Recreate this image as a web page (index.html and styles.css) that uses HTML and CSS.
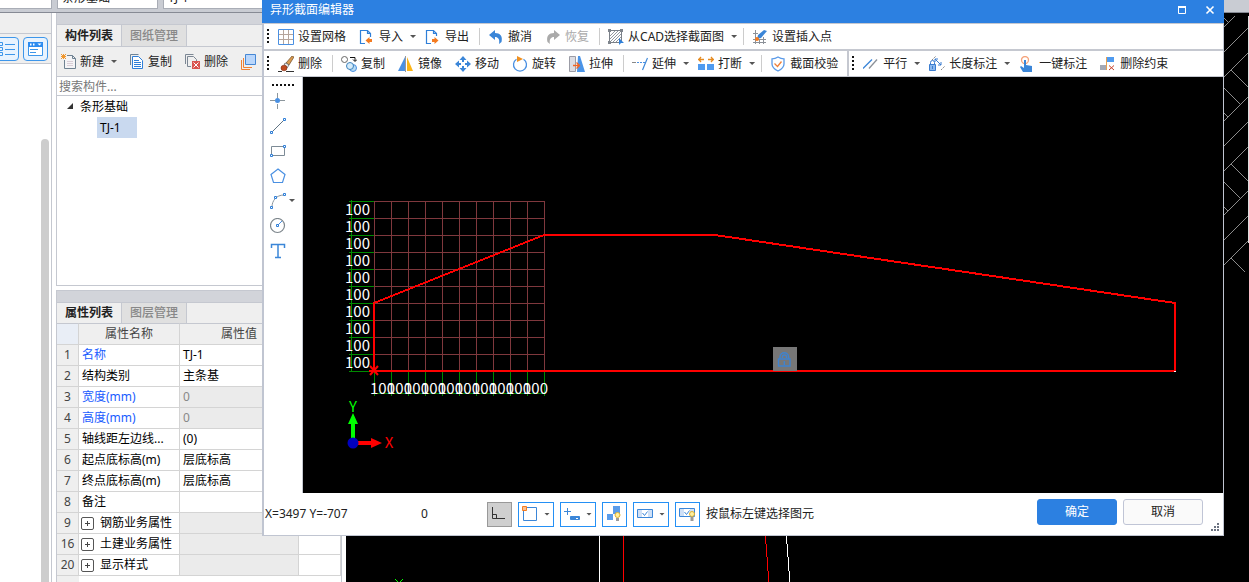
FILE: index.html
```html
<!DOCTYPE html>
<html lang="zh-CN">
<head>
<meta charset="utf-8">
<title>异形截面编辑器</title>
<link rel="stylesheet" href="styles.css">
</head>
<body>
<div class="app">
  <div class="topbar">
    <select class="combo combo-first" aria-label="楼层"><option></option></select>
    <select class="combo" aria-label="构件类型"><option>条形基础</option></select>
    <select class="combo" aria-label="构件"><option>TJ-1</option></select>
  </div>
  <div class="workspace">
    <aside class="rail">
      <div class="rail-head"></div>
      <div class="rail-tools">
        <button class="view-btn" aria-label="列表视图"><svg width="18" height="16" viewBox="0 0 18 16" fill="none" stroke="#3d96ea"><path d="M1.500 1.500h3v3h-3zM1.500 6.500h3v3h-3zM1.500 11.500h3v3h-3z"/><path d="M7 3.500h10M7 8.500h10M7 13.500h10"/></svg></button>
        <button class="view-btn" aria-label="窗口视图"><svg width="15" height="14" viewBox="0 0 15 14"><path d="M.5.500h14v13H.5z" fill="#fff" stroke="#3d96ea"/><path d="M0 0h15v5H0z" fill="#2d8cf0"/><path d="M2 1.500h1.500v2H2zM5 1.500h1.500v2H5zM9.500 1.500h4l-2 2z" fill="#fff"/><path d="M2 7.500h8M2 10.500h6" stroke="#3d96ea"/></svg></button>
      </div>
      <div class="rail-body"><div class="scroll-thumb"></div></div>
    </aside>

    <div class="panels">
      <section class="panel panel-list">
        <div class="panel-grab"></div>
        <div class="tabs"><button class="tab active">构件列表</button><button class="tab">图纸管理</button></div>
        <div class="panel-tools">
          <button class="ptool"><svg width="15" height="15" viewBox="0 0 15 15" fill="none"><path d="M3.500 5v9.500h11v-9l-4-4H6" fill="#f4f4f6"/><path d="M3.500 6v8.500h11v-10l-3-3H6M11.500 1.500v3h3" stroke="#6f8292"/><path d="M6 7.500h6M6 9.500h6M6 11.500h6" stroke="#d9cdd6"/><path d="M0 0l5 5M5 0L0 5M2.500 0v5M0 2.500h5" stroke="#f0962c"/></svg>新建<i class="arrow"></i></button>
          <button class="ptool"><svg width="14" height="15" viewBox="0 0 14 15" fill="none"><path d="M.5 11V.5h8" stroke="#6f8496"/><path d="M2.500 2.500h6l4 4v8h-10z" fill="#fff" stroke="#2f7fd8"/><path d="M4 6.500h5M4 8.500h7M4 10.500h7M4 12.500h7" stroke="#2f7fd8"/></svg>复制</button>
          <button class="ptool"><svg width="15" height="15" viewBox="0 0 15 15" fill="none"><path d="M.5 10V.5h8" stroke="#7c8794"/><path d="M6 12.500H2.500v-10h6l3 3v2" stroke="#7c8794"/><path d="M7 7h8v8H7z" fill="#d9534f"/><path d="M8.500 8.500l5 5M13.500 8.500l-5 5" stroke="#fff"/></svg>删除</button>
          <button class="ptool" aria-label="层间复制"><svg width="15" height="16" viewBox="0 0 15 16" fill="none"><path d="M.5 6v9.500H9M2.500 4v9.500H11" stroke="#ef8033"/><path d="M4.500.500h10v10h-10z" fill="#b9d6fb" stroke="#4687d4"/></svg></button>
        </div>
        <input class="search" type="text" placeholder="搜索构件..." aria-label="搜索构件">
        <ul class="tree">
          <li><svg width="7" height="7" viewBox="0 0 7 7"><path d="M6 0v6H0z" fill="#333"/></svg>条形基础
            <ul><li class="selected">TJ-1</li></ul></li>
        </ul>
      </section>

      <section class="panel panel-props">
        <div class="panel-grab"></div>
        <div class="tabs"><button class="tab active">属性列表</button><button class="tab">图层管理</button></div>
        <table class="props">
          <colgroup><col class="c-num"><col class="c-name"><col class="c-value"><col></colgroup>
          <thead><tr><th class="corner"></th><th>属性名称</th><th>属性值</th><th></th></tr></thead>
          <tbody>
            <tr><th>1</th><td class="key">名称</td><td>TJ-1</td><td></td></tr>
            <tr><th>2</th><td>结构类别</td><td>主条基</td><td></td></tr>
            <tr><th>3</th><td class="key">宽度(mm)</td><td class="off">0</td><td></td></tr>
            <tr><th>4</th><td class="key">高度(mm)</td><td class="off">0</td><td></td></tr>
            <tr><th>5</th><td>轴线距左边线...</td><td>(0)</td><td></td></tr>
            <tr><th>6</th><td>起点底标高(m)</td><td>层底标高</td><td></td></tr>
            <tr><th>7</th><td>终点底标高(m)</td><td>层底标高</td><td></td></tr>
            <tr><th>8</th><td>备注</td><td></td><td></td></tr>
            <tr><th>9</th><td class="group"><button class="expand" aria-label="展开"></button>钢筋业务属性</td><td class="off"></td><td></td></tr>
            <tr><th>16</th><td class="group"><button class="expand" aria-label="展开"></button>土建业务属性</td><td class="off"></td><td></td></tr>
            <tr><th>20</th><td class="group"><button class="expand" aria-label="展开"></button>显示样式</td><td class="off"></td><td></td></tr>
          </tbody>
        </table>
        <div class="props-rest"></div>
      </section>
    </div>

    <main class="model">
      <svg viewBox="346 13 903 569" preserveAspectRatio="xMinYMin slice" fill="none" shape-rendering="crispEdges">
        <g stroke="#8c8c8c">
          <path d="M1224 27l11-11M1224 18l5 5M1224 52l24-24"/>
          <path id="brick" d="M1224 77l24-24M1231 70l17 17M1224 88l17 17M1224 121l24-24M1224 113l4 4M1224 146l24-24"/>
          <use href="#brick" y="94"/>
          <path d="M1224 265l24-24M1231 258l14 14"/>
        </g>
        <path d="M1248.500 16v227" stroke="#ddd"/>
        <path d="M599.500 530v60M786 530l4 54" stroke="#fff"/>
        <path d="M623.500 530v60M765 530l4 54" stroke="#f00"/>
        <path d="M395 579l4 4 4-4" stroke="#0f0"/>
      </svg>
    </main>
  </div>

  <div class="dialog" role="dialog" aria-labelledby="dlg-title">
    <header class="titlebar">
      <h1 id="dlg-title">异形截面编辑器</h1>
      <button aria-label="最大化"><svg width="10" height="10" viewBox="0 0 10 10"><path d="M1.500 2h7v6.500h-7z" fill="none" stroke="#fff"/><path d="M1 1h8v2H1z" fill="#fff"/></svg></button>
      <button aria-label="关闭"><svg width="10" height="10" viewBox="0 0 10 10"><path d="M1.500 1.500l7 7M8.500 1.500l-7 7" stroke="#fff" stroke-width="1.600"/></svg></button>
    </header>

    <div class="toolbar">
      <div class="bar">
        <i class="grip"></i>
        <button class="tool"><svg viewBox="0 0 16 16"><path d="M5.500 0v16M10.500 0v16M0 5.500h16M0 10.500h16" fill="none" stroke="#b5a59c"/><path d="M.5.500h15v15H.5z" fill="none" stroke="#4a90e2"/></svg>设置网格</button>
        <button class="tool"><svg viewBox="0 0 16 16"><path d="M6 14.500H1.500V1.500h7l3 3V8M8.500 1.500v3h3" fill="none" stroke="#2f7fd8" stroke-width="1.200"/><path d="M6.500 11.500l4-3.500v2H13v3h-2.500v2z" fill="#f47b20"/></svg>导入<i class="arrow"></i></button>
        <button class="tool"><svg viewBox="0 0 16 16"><path d="M6 14.500H1.500V1.500h7l3 3V7M8.500 1.500v3h3" fill="none" stroke="#2f7fd8" stroke-width="1.200"/><path d="M13.500 11.500l-4-3.500v2H7v3h2.500v2z" fill="#f47b20"/></svg>导出</button>
        <i class="sep"></i>
        <button class="tool"><svg viewBox="0 0 16 16"><path d="M1 6l6-5v3c5 0 8 3 6.500 9L11 15c1-5-1-7-4-7v3z" fill="#3b86d8"/></svg>撤消</button>
        <button class="tool" disabled><svg viewBox="0 0 16 16"><path d="M15 6L9 1v3C4 4 1 7 2.500 13L5 15c-1-5 1-7 4-7v3z" fill="#aaa"/></svg>恢复</button>
        <i class="sep"></i>
        <button class="tool"><svg viewBox="0 0 16 16"><path d="M1.500 1.500h12v12h-12z" fill="none" stroke="#7a8088"/><path d="M2 7l5-5M2 10l8-8M2 13L13 2M5 13l8-8M8 13l5-5" fill="none" stroke="#9298a0"/><path d="M0 0h3v3H0zM12 0h3v3h-3zM0 12h3v3H0z" fill="#7f858d"/><path d="M11 9l5 5h-3l-2 2z" fill="#2f7fd8"/></svg>从CAD选择截面图<i class="arrow"></i></button>
        <i class="sep"></i>
        <button class="tool"><svg viewBox="0 0 16 16"><path d="M3.500 1v14M11.500 8v7M7.500 10v5M1 4.500h5M1 10.500h13M1 13.500h13" fill="none" stroke="#8c9198"/><path d="M5 10l1-4 6-5 3 1-6 7z" fill="#3b86d8"/><circle cx="5" cy="10" r="2" fill="#f47b20"/></svg>设置插入点</button>
      </div>
    </div>
    <div class="toolbar">
      <div class="bar bar-edit">
        <i class="grip"></i>
        <button class="tool"><svg viewBox="0 0 16 16"><path d="M0 15.500h4M8 15.500h8" stroke="#333"/><path d="M8 7l6-7 2 1-5 8z" fill="#d99a4e" stroke="#6b4a2b" stroke-width=".7"/><path d="M6 8l2-1 3 2-2 3z" fill="#e9e9e9" stroke="#555" stroke-width=".7"/><ellipse cx="6" cy="12" rx="3" ry="2.800" fill="#c04a1f" stroke="#7c2a12" stroke-width=".6"/></svg>删除</button>
        <i class="sep"></i>
        <button class="tool"><svg viewBox="0 0 16 16" fill="none"><circle cx="3.500" cy="3.500" r="3" stroke="#666"/><circle cx="12" cy="12" r="3.500" fill="#b8dcf5" stroke="#4a90e2"/><circle cx="9" cy="10" r="3.500" fill="#d6ecfa" stroke="#3c82bd"/><path d="M9 1.500h5V5M12 3.500L14 5.500l2-2" stroke="#111"/></svg>复制</button>
        <button class="tool"><svg viewBox="0 0 16 16"><path d="M7 1v14H0z" fill="#4a90e2"/><path d="M9 1v14h6z" fill="#fcb415"/><path d="M7.500 0v16" stroke="#999"/></svg>镜像</button>
        <button class="tool"><svg viewBox="0 0 16 16" fill="#3b86d8"><path d="M8 0l3.500 4H9v2H7V4H4.500zM8 16l3.500-4H9v-2H7v2H4.500zM0 8l4-3.500V7h2v2H4v2.500zM16 8l-4-3.500V7h-2v2h2v2.500z"/></svg>移动</button>
        <button class="tool"><svg viewBox="0 0 16 16"><path d="M4.500 3.200A6.500 6.500 0 1 0 11.500 3.200" fill="none" stroke="#4a90e2" stroke-width="1.300"/><path d="M5 0l6 3-6 3z" fill="#f09020"/></svg>旋转</button>
        <button class="tool"><svg viewBox="0 0 16 16"><path d="M.5.500h6v15h-6z" fill="#dcdde3" stroke="#9b9ca6"/><path d="M9 0h2l5 16H8z" fill="#4a94e8"/><path d="M4 9.500h6M7.500 6.500l3 3-3 3" fill="none" stroke="#f26522" stroke-width="1.300"/></svg>拉伸</button>
        <i class="sep"></i>
        <button class="tool"><svg viewBox="0 0 16 16" fill="none"><path d="M0 6.500h4" stroke="#888"/><path d="M5 6.500h2M8 6.500h2M11 6.500h2" stroke="#4a90e2"/><path d="M15.500 2l-5 12" stroke="#3b86d8" stroke-width="1.200"/></svg>延伸<i class="arrow"></i></button>
        <button class="tool"><svg viewBox="0 0 16 16"><path d="M0 8h7v6H0zM9 8h7v6H9z" fill="#4f9bf0"/><path d="M0 3.500h6M3 1L.8 3.500 3 6M16 3.500h-6M13 1l2.200 2.500L13 6" fill="none" stroke="#e58a1f" stroke-width="1.300"/></svg>打断<i class="arrow"></i></button>
        <i class="sep"></i>
        <button class="tool"><svg viewBox="0 0 16 16" fill="none"><path d="M8 1c2 1.300 4 1.800 6 1.800V8c0 3-2 5-6 7-4-2-6-4-6-7V2.800C4 2.800 6 2.300 8 1z" stroke="#5a9ae8" stroke-width="1.300"/><path d="M4.500 7.500l3 3 4-5" stroke="#f0803a" stroke-width="1.300"/></svg>截面校验</button>
      </div>
      <div class="bar bar-constraint">
        <i class="grip"></i>
        <button class="tool"><svg viewBox="0 0 16 16" fill="none"><path d="M0 12.500l9-9" stroke="#3b86d8" stroke-width="1.300"/><path d="M6 12.500l8-9" stroke="#8a9098" stroke-width="1.300"/></svg>平行<i class="arrow"></i></button>
        <button class="tool"><svg viewBox="0 0 16 16" fill="none"><path d="M.5 8.500h6v6h-6z" fill="#8bb8ee" stroke="#3b7dd0"/><path d="M1.500 8V6.500a2 2 0 0 1 4 0V8M3.500 10v3" stroke="#3b7dd0"/><path d="M6 3l6 6M6 6V3h3M12 6v3H9" stroke="#3b7dd0"/><path d="M3 4l4-4M12 14l4-4" stroke="#888" stroke-dasharray="2 1"/></svg>长度标注<i class="arrow"></i></button>
        <button class="tool"><svg viewBox="0 0 16 16"><circle cx="6" cy="4" r="3.500" fill="none" stroke="#f5a47c" stroke-width="1.300"/><path d="M5 4h2v5l6 1v6H4l-3-5 1-1 3 2z" fill="#3b86d8"/></svg>一键标注</button>
        <button class="tool"><svg viewBox="0 0 16 16"><path d="M7 1h7v5H7z" fill="#4f9bf0"/><path d="M0 9h6v5H0z" fill="#a4a9b5"/><path d="M6.500 1v13" stroke="#e8a050"/><path d="M9 9.500l5 4.500M14 9.500L9 14" stroke="#c8402a"/></svg>删除约束</button>
      </div>
    </div>

    <div class="editor">
      <nav class="shapes">
        <i class="grip-h"></i>
        <button class="shape" aria-label="点"><svg viewBox="0 0 16 16"><path d="M7.500 0v5M7.500 11v5M0 7.500h5M10 7.500h5" stroke="#8c969c"/><circle cx="7.500" cy="7.500" r="2.500" fill="#4a90e2"/></svg></button>
        <button class="shape" aria-label="直线"><svg viewBox="0 0 16 16" fill="none"><path d="M2 14L14 2" stroke="#5f7383"/><path class="node" d="M.5 13.500h2v2h-2zM13.500.500h2v2h-2z"/></svg></button>
        <button class="shape" aria-label="矩形"><svg viewBox="0 0 16 16" fill="none"><path d="M1.500 3.500h13v9h-13z" stroke="#7d8b96"/><path class="node" d="M.5 11.500h2v2h-2zM13.500 2.500h2v2h-2z"/></svg></button>
        <button class="shape" aria-label="多边形"><svg viewBox="0 0 16 16"><path d="M8 1L15 6.500l-2.500 8h-9L1 6.500z" fill="none" stroke="#4a90e2" stroke-width="1.200"/></svg></button>
        <button class="shape with-menu" aria-label="圆弧"><svg viewBox="0 0 16 16" fill="none"><path d="M2 14C2 8 6 2 14 2" stroke="#8b969e"/><path class="node" d="M.5 13.500h2v2h-2zM4.500 3.500h2v2h-2zM13.500.500h2v2h-2z"/></svg><i class="arrow"></i></button>
        <button class="shape" aria-label="圆"><svg viewBox="0 0 16 16" fill="none"><circle cx="7.500" cy="7.500" r="7" stroke="#7d868c" stroke-width="1.200"/><path d="M7 8l5-5" stroke="#4a90e2"/><path class="node" d="M6.500 6.500h2v2h-2z"/></svg></button>
        <button class="shape" aria-label="文字"><svg viewBox="0 0 16 16"><path d="M1.500 5V1.500h13V5M8 1.500v13M5 14.500h6" fill="none" stroke="#3b86d8" stroke-width="1.500"/></svg></button>
      </nav>
      <div class="canvas">
        <svg viewBox="303 77 920 416" preserveAspectRatio="xMinYMin slice" fill="none">
          <g shape-rendering="crispEdges">
            <path stroke="#7f383d" d="M374.500 201v170M391.500 201v170M408.500 201v170M425.500 201v170M442.500 201v170M459.500 201v170M476.500 201v170M493.500 201v170M510.500 201v170M527.500 201v170M544.500 201v170M374 201.500h171M374 218.500h171M374 235.500h171M374 252.500h171M374 269.500h171M374 286.500h171M374 303.500h171M374 320.500h171M374 337.500h171M374 354.500h171"/>
            <path stroke="#008a00" d="M351.500 200v172M349 201.500h25M349 218.500h25M349 235.500h25M349 252.500h25M349 269.500h25M349 286.500h25M349 303.500h25M349 320.500h25M349 337.500h25M349 354.500h25M349 371.500h25M373 393.500h172M374.500 372v24M391.500 372v24M408.500 372v24M425.500 372v24M442.500 372v24M459.500 372v24M476.500 372v24M493.500 372v24M510.500 372v24M527.500 372v24M544.500 372v24"/>
            <path stroke="#f00" stroke-width="2" d="M374 371V303L544 235H715L1175 303V371z"/>
          </g>
          <path stroke="#f00" stroke-width="2" d="M370 366l8 9M378 366l-8 9M369 371h10"/>
          <g class="dims">
            <text x="345" y="215">100</text><text x="345" y="232">100</text><text x="345" y="249">100</text><text x="345" y="266">100</text><text x="345" y="283">100</text><text x="345" y="300">100</text><text x="345" y="317">100</text><text x="345" y="334">100</text><text x="345" y="351">100</text><text x="345" y="368">100</text>
            <text x="370" y="394">100</text><text x="387" y="394">100</text><text x="404" y="394">100</text><text x="421" y="394">100</text><text x="438" y="394">100</text><text x="455" y="394">100</text><text x="472" y="394">100</text><text x="489" y="394">100</text><text x="506" y="394">100</text><text x="523" y="394">100</text>
          </g>
          <path fill="#0f0" d="M351 442v-18h-3l5-11 5 11h-3v18z"/>
          <path fill="#f00" d="M353 441h18v-3l11 5-11 5v-3h-18z"/>
          <circle cx="353" cy="443" r="5.500" fill="#0000c0"/>
          <text class="axis axis-y" x="353" y="412">Y</text>
          <text class="axis axis-x" x="389" y="448">X</text>
          <path fill="#777" d="M773 347h24v24h-24z"/>
          <path stroke="#3f83cf" stroke-width="1.400" d="M778.500 359h11.500v7h-11.500zM780 359v-2a4.300 4.300 0 0 1 8.600 0v2M782.500 358v-1a2 2 0 0 1 4 0v1M784.300 361v4"/>
          <path stroke="#fff" d="M1174 371.500h2"/>
        </svg>
      </div>
    </div>

    <footer class="statusbar">
      <output class="coords">X=3497 Y=-707</output>
      <output class="count">0</output>
      <button class="snap pressed" aria-label="正交"><svg viewBox="0 0 16 16" fill="none" stroke="#333"><path d="M.5 1v11.500H13M.5 8.500h4v4"/></svg></button>
      <button class="snap" aria-label="捕捉"><svg viewBox="0 0 16 16" fill="none"><path d="M1.500 1.500h13v13h-13z" stroke="#3b86d8"/><path d="M.5.500h4v4h-4z" fill="#fac090" stroke="#f47b20"/></svg><i class="arrow"></i></button>
      <button class="snap" aria-label="偏移"><svg viewBox="0 0 16 16" fill="none"><path d="M0 5.500h7M3.500 2v7" stroke="#3b86d8"/><path d="M6.500 10.500h9v3h-9z" fill="#3b86d8" stroke="#3b86d8"/><path d="M12 12.500h2" stroke="#fff"/></svg><i class="arrow"></i></button>
      <button class="snap" aria-label="显示约束"><svg viewBox="0 0 16 16"><path d="M7 0h7v8H7zM1 8h6v6H1z" fill="#5a9cea"/><circle cx="11.500" cy="9" r="2.500" fill="#fff0a0" stroke="#e0b030"/><path d="M10 12h3v3h-3z" fill="#999"/></svg></button>
      <button class="snap" aria-label="检查"><svg viewBox="0 0 16 16" fill="none"><path d="M.5 3.500h15v8H.5z" fill="#cfe0f6" stroke="#3b86d8"/><path d="M5 4h6v7H5z" fill="#fff"/><path d="M5.500 7l2 2.500 3-4" stroke="#3b86d8"/></svg><i class="arrow"></i></button>
      <button class="snap" aria-label="显示检查"><svg viewBox="0 0 16 16" fill="none"><path d="M.5 2.500h15v8H.5z" fill="#cfe0f6" stroke="#3b86d8"/><path d="M5 3h6v7H5z" fill="#fff"/><path d="M5.500 6l2 2.500 3-4" stroke="#3b86d8"/><circle cx="13" cy="8" r="2.500" fill="#fff0a0" stroke="#e0b030"/><path d="M11.500 11h3v4h-3z" fill="#999"/></svg></button>
      <span class="hint">按鼠标左键选择图元</span>
      <button class="action primary">确定</button>
      <button class="action">取消</button>
      <svg class="resize" viewBox="0 0 8 8" fill="#6b7280"><path d="M6 0h2v2H6zM3 3h2v2H3zM6 3h2v2H6zM0 6h2v2H0zM3 6h2v2H3zM6 6h2v2H6z"/></svg>
    </footer>
  </div>
</div>
</body>
</html>
```

FILE: styles.css
```css
* { box-sizing: border-box; }

:root {
  --line: #c5c8d0;
  --cell: #d4d4d4;
  --soft: #efefef;
  --blue: #2c80e1;
}

body {
  margin: 0;
  overflow: hidden;
  background: #fff;
  color: #222;
  font: 12px/18px "Noto Sans", "Noto Sans CJK SC", sans-serif;
}

button, input, select {
  margin: 0;
  padding: 0;
  border: 0;
  background: none;
  color: inherit;
  font: inherit;
}

svg { display: block; flex: none; }
ul { margin: 0; padding: 0; list-style: none; }

.app {
  display: flex;
  flex-direction: column;
  height: 100vh;
  position: relative;
}

/* top selector strip */
.topbar {
  display: flex;
  align-items: flex-end;
  flex: none;
  gap: 5px;
  height: 13px;
  padding-bottom: 3px;
  overflow: hidden;
  background: #c9ccd3;
  border-bottom: 1px solid #868a94;
}
.combo {
  flex: none;
  width: 101px;
  height: 22px;
  padding: 0 4px;
  border: 1px solid #a9adb6;
  background: #fff;
  appearance: none;
}
.combo-first { width: 52px; border-left: 0; }

.workspace { display: flex; flex: 1; min-height: 0; }

/* left rail */
.rail {
  display: flex;
  flex-direction: column;
  flex: none;
  width: 52px;
  border-right: 1px solid var(--line);
}
.rail-head { height: 21px; background: var(--soft); border-bottom: 1px solid var(--line); }
.rail-tools {
  display: flex;
  justify-content: flex-end;
  align-items: center;
  gap: 4px;
  height: 30px;
  padding-right: 3px;
  overflow: hidden;
  background: var(--soft);
  border-bottom: 1px solid var(--line);
}
.view-btn {
  display: grid;
  flex: none;
  place-items: center;
  width: 25px;
  height: 24px;
  border: 1px solid #3d96ea;
  border-radius: 4px;
  background: #e8f3fe;
}
.rail-body { display: flex; flex: 1; justify-content: flex-end; padding: 75px 2px 0 0; }
.scroll-thumb { width: 8px; border-radius: 4px 4px 0 0; background: #cdcdcd; }

/* docked panels */
.panels {
  display: flex;
  flex-direction: column;
  flex: none;
  gap: 4px;
  width: 294px;
  padding: 0 4px;
}
.panel { display: flex; flex-direction: column; border: 1px solid var(--line); }
.panel-list { flex: 0 0 273px; border-top: 0; }
.panel-props { flex: 1; min-height: 0; border-bottom: 0; }
.panel-grab { flex: none; height: 11px; background: #d2d4da; }
.tabs {
  display: flex;
  flex: none;
  height: 22px;
  background: var(--soft);
  border-top: 1px solid var(--line);
}
.panel-props .tabs { height: 21px; }
.tab {
  width: 65px;
  background: #e0e0e0;
  border-right: 1px solid var(--line);
  color: #888;
  font-weight: 500;
}
.tab.active { background: var(--soft); color: #222; font-weight: 700; }
.panel-tools {
  display: flex;
  align-items: center;
  gap: 13px;
  height: 31px;
  padding-left: 4px;
  border-top: 1px solid var(--line);
  border-bottom: 1px solid var(--line);
  background: var(--soft);
}
.ptool { display: flex; align-items: center; gap: 4px; }
.search {
  height: 19px;
  padding: 0 2px;
  border-bottom: 1px solid var(--line);
  outline: 0;
}
.search::placeholder { color: #777; opacity: 1; }
.tree { line-height: 21px; color: #000; }
.tree > li { padding-left: 23px; }
.tree > li > svg { float: left; margin: 7px 0 0 -13px; }
.tree .selected {
  width: 40px;
  margin-left: 17px;
  padding-left: 3px;
  background: #c9d9ef;
}

/* property grid */
.props {
  width: 100%;
  table-layout: fixed;
  border-collapse: separate;
  border-spacing: 0;
  line-height: 20px;
  color: #000;
}
.c-num { width: 22px; }
.c-name { width: 101px; }
.c-value { width: 119px; }
.props th, .props td {
  height: 21px;
  padding: 0 0 0 3px;
  overflow: hidden;
  border-right: 1px solid var(--cell);
  border-bottom: 1px solid var(--cell);
  text-align: left;
  white-space: nowrap;
}
.props th {
  padding: 0;
  background: var(--soft);
  color: #444;
  font-weight: 400;
  text-align: center;
}
.props thead th { height: 22px; border-top: 1px solid var(--line); }
.props .corner { background: #e9eef6; }
.props .key { color: #1a5cff; }
.props .off { background: #ebebeb; color: #888; }
.props .group { padding-left: 2px; }
.props .expand {
  width: 13px;
  height: 13px;
  margin-right: 6px;
  border: 1px solid #555;
  border-radius: 2px;
  vertical-align: -2px;
  background:
    linear-gradient(#444, #444) center / 5px 1px no-repeat,
    linear-gradient(#444, #444) center / 1px 5px no-repeat;
}
.props-rest { flex: 1; width: 22px; background: var(--soft); }

/* model view behind the dialog */
.model { flex: 1; min-width: 0; background: #000; }
.model svg, .canvas svg { width: 100%; height: 100%; }

/* editor dialog floating over the application */
.dialog {
  position: absolute;
  top: 0;
  right: 25px;
  bottom: 46px;
  left: 262px;
  display: flex;
  flex-direction: column;
  border: solid #c0c5d1;
  border-width: 0 1px 1px 2px;
  background: #fff;
}
.titlebar {
  display: flex;
  align-items: center;
  flex: none;
  gap: 18px;
  height: 23px;
  margin: 0 -1px 0 -2px;
  padding: 0 9px 4px 8px;
  background: var(--blue);
  color: #fff;
}
.titlebar h1 { flex: 1; margin: 0; font: inherit; }

.toolbar {
  display: flex;
  flex: none;
  border-top: 1px solid var(--line);
  border-bottom: 1px solid var(--line);
}
.bar { display: flex; align-items: center; gap: 2px; height: 25px; padding-left: 3px; }
.bar-constraint { border-left: 2px solid var(--line); }
.bar-edit { padding-right: 3px; }
.grip {
  width: 3px;
  height: 15px;
  margin-right: 1px;
  background: repeating-linear-gradient(#111 0 2px, transparent 2px 4px) left / 2px 100% no-repeat;
}
.tool {
  display: flex;
  align-items: center;
  gap: 4px;
  height: 21px;
  padding: 0 6px 0 5px;
  white-space: nowrap;
}
.tool:has(.arrow) { padding-right: 2px; }
.tool svg, .shape svg, .snap svg { width: 16px; height: 16px; }
.tool:disabled { color: #aaa; }
.sep { width: 1px; height: 17px; margin: 0 1px 0 2px; background: #ccc; }
.arrow {
  flex: none;
  width: 6px;
  height: 3px;
  margin-left: 3px;
  background: #555;
  clip-path: polygon(0 0, 100% 0, 50% 100%);
}

.editor { display: flex; flex: 1; min-height: 0; }
.shapes {
  display: flex;
  flex-direction: column;
  align-items: flex-start;
  flex: none;
  gap: 4px;
  width: 39px;
  padding: 7px 0 0 6px;
  border-right: 1px solid var(--line);
}
.grip-h {
  width: 22px;
  height: 2px;
  margin-left: 2px;
  background: repeating-linear-gradient(90deg, #111 0 2px, transparent 2px 4px);
}
.shape { display: flex; align-items: center; height: 21px; }
.shape .arrow { margin-left: 3px; }
.node { fill: #fff; stroke: #2f7fd8; }
.canvas { flex: 1; min-width: 0; background: #000; }
.dims { fill: #fff; font: 400 15px "Noto Sans CJK SC", sans-serif; }
.axis { font: 400 15px "Noto Sans CJK SC", sans-serif; text-anchor: middle; }
.axis-x { fill: #f00; }
.axis-y { fill: #0f0; }

.statusbar {
  display: flex;
  align-items: center;
  flex: none;
  gap: 6px;
  height: 42px;
  padding: 0 4px 0 1px;
}
.coords { width: 150px; }
.count { width: 60px; }
.snap {
  display: flex;
  align-items: center;
  flex: none;
  height: 25px;
  padding: 0 4px 0 3px;
  border: 1px solid #2490f5;
}
.snap:has(.arrow) { padding-right: 3px; }
.snap .arrow { margin-left: 6px; }
.snap.pressed { border-color: #999; background: #cfcfcf; }
.snap.pressed svg { margin: 0 -1px 0 1px; }
.hint { flex: 1; }
.action {
  width: 80px;
  height: 26px;
  margin-bottom: 4px;
  border: 1px solid #c0c5d6;
  border-radius: 3px;
  background: #fafafa;
}
.action.primary { border-color: var(--blue); background: var(--blue); color: #fff; }
.resize { align-self: flex-end; width: 8px; height: 8px; margin: 0 0 4px 2px; }
```
